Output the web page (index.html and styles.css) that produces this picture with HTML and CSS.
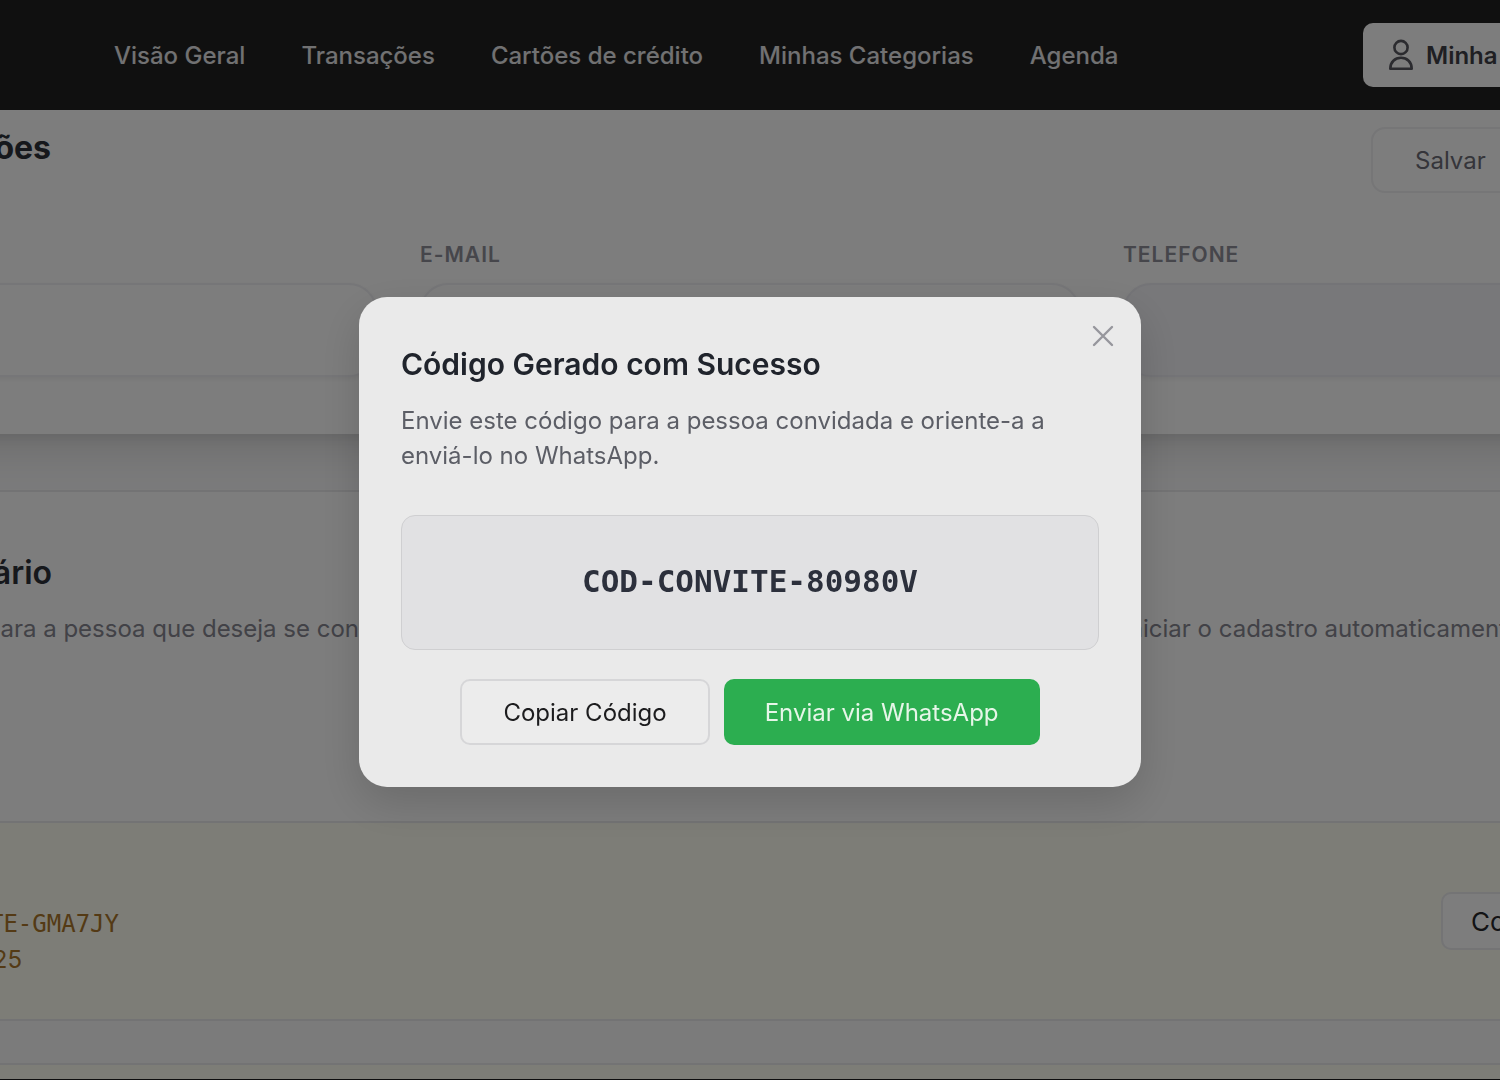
FILE: index.html
```html
<!DOCTYPE html>
<html lang="pt-BR">
<head>
<meta charset="utf-8">
<meta name="viewport" content="width=device-width, initial-scale=1">
<title>Minha Conta</title>
<link rel="stylesheet" href="styles.css">
</head>
<body>

<header class="topbar">
  <nav class="nav">
    <a href="#">Visão Geral</a>
    <a href="#">Transações</a>
    <a href="#">Cartões de crédito</a>
    <a href="#">Minhas Categorias</a>
    <a href="#">Agenda</a>
  </nav>
  <button class="account" type="button">
    <svg width="26" height="32" viewBox="0 0 26 32" fill="none" stroke="currentColor" stroke-width="2.6" stroke-linejoin="round">
      <circle cx="13" cy="8.5" r="6.6"/>
      <path d="M2.3 29.8C2.300 23 7 18.800 13 18.800s10.700 4.200 10.700 11z"/>
    </svg>
    Minha Conta
  </button>
</header>

<main>
  <section class="card profile">
    <div class="shell">
      <div class="profile-head">
        <h1 class="heading">Informações</h1>
        <button class="save" type="button">Salvar</button>
      </div>
      <form class="fields">
        <div class="field">
          <label for="name">Nome</label>
          <input id="name" type="text">
        </div>
        <div class="field">
          <label for="email">E-mail</label>
          <input id="email" type="email">
        </div>
        <div class="field">
          <label for="phone">Telefone</label>
          <input id="phone" class="locked" type="tel" readonly>
        </div>
      </form>
    </div>
  </section>

  <section class="card invite">
    <div class="shell">
      <h2 class="heading">Usuário</h2>
      <p class="hint">
        <span class="hint-start">para a pessoa que deseja se cone</span>
        <span class="hint-end">iniciar o cadastro automaticamente</span>
      </p>
    </div>
  </section>

  <ul class="codes">
    <li class="code-row">
      <div class="shell code-inner">
        <div class="code-text">
          <p class="code">CONVITE-GMA7JY</p>
          <p class="date">2025</p>
        </div>
        <button class="copy" type="button">Copiar</button>
      </div>
    </li>
    <li class="code-row"></li>
  </ul>
</main>

<div class="overlay">
  <div class="modal" role="dialog" aria-modal="true" aria-labelledby="modal-title">
    <button class="close" type="button" aria-label="Fechar">
      <svg width="22" height="22" viewBox="0 0 22 22" fill="none" stroke="currentColor" stroke-width="2.4" stroke-linecap="round">
        <path d="M2 2l18 18M20 2L2 20"/>
      </svg>
    </button>
    <h2 id="modal-title" class="modal-title">Código Gerado com Sucesso</h2>
    <p class="modal-text">Envie este código para a pessoa convidada e oriente-a a enviá-lo no WhatsApp.</p>
    <div class="modal-code">COD-CONVITE-80980V</div>
    <div class="modal-actions">
      <button class="btn" type="button">Copiar Código</button>
      <button class="btn btn-green" type="button">Enviar via WhatsApp</button>
    </div>
  </div>
</div>

</body>
</html>
```

FILE: styles.css
```css
* {
  box-sizing: border-box;
}

body {
  margin: 0;
  height: 100vh;
  overflow: hidden;
  background: #f6f6f7;
  border-bottom: 1px solid #1c1c1c;
  font-family: Inter, "Liberation Sans", sans-serif;
  font-size: 24px;
  color: #2c3038;
}

main {
  height: calc(100vh - 111px);
  overflow: hidden;
}

h1, h2, p, ul {
  margin: 0;
  padding: 0;
}

button {
  font-family: inherit;
  font-size: 24px;
  white-space: nowrap;
}

/* wider than the window on both sides */
.shell {
  margin: 0 -283px;
}

/* top bar */
.topbar {
  display: flex;
  align-items: center;
  height: 110px;
  padding-left: 114px;
  background: #212121;
}

.nav {
  display: flex;
  flex: 0 0 1249px;
  gap: 56px;
}

.nav a {
  color: #e2e2e4;
  font-weight: 500;
  text-decoration: none;
  white-space: nowrap;
}

.account {
  display: flex;
  flex: none;
  align-items: center;
  gap: 12px;
  height: 64px;
  padding: 0 25px;
  border: 0;
  border-radius: 10px;
  background: #fafafa;
  color: #3f3f46;
  font-weight: 600;
}

.account svg {
  color: #56565e;
}

/* profile */
.card {
  background: #fafafa;
}

.profile {
  height: 324px;
  margin: 0 -60px;
  padding: 17px 60px 0;
  box-shadow: 0 12px 44px rgba(0, 0, 0, .14), 0 4px 12px rgba(0, 0, 0, .08);
}

.profile-head {
  display: flex;
  justify-content: space-between;
}

.heading {
  width: 334px;
  text-align: right;
  font-size: 32px;
  line-height: 42px;
  font-weight: 700;
}

.save {
  width: 412px;
  height: 66px;
  padding: 0 42px;
  border: 2px solid #ececee;
  border-radius: 14px;
  background: #fafafa;
  color: #6a6a74;
  text-align: left;
}

.fields {
  display: grid;
  grid-template-columns: 1fr 1fr 1fr;
  gap: 43px;
  margin-top: 48px;
}

.field label {
  display: block;
  height: 42px;
  font-size: 21px;
  line-height: 28px;
  font-weight: 600;
  letter-spacing: 1px;
  text-transform: uppercase;
  color: #8c8c96;
}

.field input {
  display: block;
  width: 100%;
  height: 94px;
  padding: 0 28px;
  border: 2px solid #ececf0;
  border-radius: 28px;
  background: #fafafa;
  font: inherit;
  box-shadow: 0 2px 4px rgba(0, 0, 0, .05);
}

.field .locked {
  background: #f0f0f4;
  border-color: #e8e8ee;
}

/* invite */
.invite {
  position: relative;
  height: 331px;
  margin-top: 56px;
  padding-top: 60px;
  border-top: 2px solid #e6e6e8;
}

.invite .heading {
  width: 335px;
  font-weight: 600;
}

.hint {
  display: grid;
  grid-template-columns: 1fr 1fr 1fr;
  gap: 43px;
  margin-top: 17px;
  line-height: 35px;
  color: #84848e;
  white-space: nowrap;
}

.hint-start {
  padding-right: 4px;
  text-align: right;
}

.hint-end {
  grid-column: 3;
}

.codes {
  list-style: none;
}

.code-row {
  height: 200px;
  margin-bottom: 42px;
  border-top: 2px solid #e6e6e8;
  border-bottom: 2px solid #e6e6e8;
  background: #fbfbee;
}

.code-inner {
  display: flex;
  align-items: center;
  justify-content: space-between;
  height: 100%;
}

.code-text {
  width: 402px;
  padding-top: 42px;
  text-align: right;
  line-height: 36px;
  color: #a8752a;
}

.code {
  font-family: "DejaVu Sans Mono", monospace;
}

.date {
  padding-right: 97px;
}

.copy {
  width: 342px;
  height: 58px;
  padding: 0 28px;
  border: 2px solid #e8e8ea;
  border-radius: 10px;
  background: #fafafa;
  color: #27272a;
  font-size: 26px;
  text-align: left;
}

/* modal */
.overlay {
  position: fixed;
  inset: 0;
  display: flex;
  align-items: center;
  justify-content: center;
  padding-top: 4px;
  background: rgba(0, 0, 0, .5);
}

.modal {
  position: relative;
  width: 782px;
  padding: 42px;
  border-radius: 28px;
  background: #eaeaea;
  box-shadow: 0 16px 44px rgba(0, 0, 0, .15);
}

.close {
  position: absolute;
  top: 28px;
  right: 27px;
  display: flex;
  padding: 0;
  border: 0;
  background: none;
  color: #96969c;
}

.modal-title {
  font-size: 30px;
  line-height: 50px;
  font-weight: 600;
  color: #20242c;
}

.modal-text {
  margin: 14px 0 42px;
  line-height: 35px;
  color: #5c5e66;
}

.modal-code {
  padding: 44px 0 46px;
  border: 1px solid #cfcfd1;
  border-radius: 14px;
  background: #e1e1e3;
  font-family: "DejaVu Sans Mono", monospace;
  font-size: 31px;
  line-height: 43px;
  font-weight: 700;
  text-align: center;
  color: #2c303c;
}

.modal-actions {
  display: flex;
  justify-content: center;
  gap: 14px;
  margin-top: 29px;
}

.btn {
  height: 66px;
  padding: 0 41px;
  border: 2px solid #d6d6d8;
  border-radius: 10px;
  background: #ececec;
  color: #1c1c1e;
}

.btn-green {
  border: 0;
  background: #2cae50;
  color: #e6f6e8;
}
```
